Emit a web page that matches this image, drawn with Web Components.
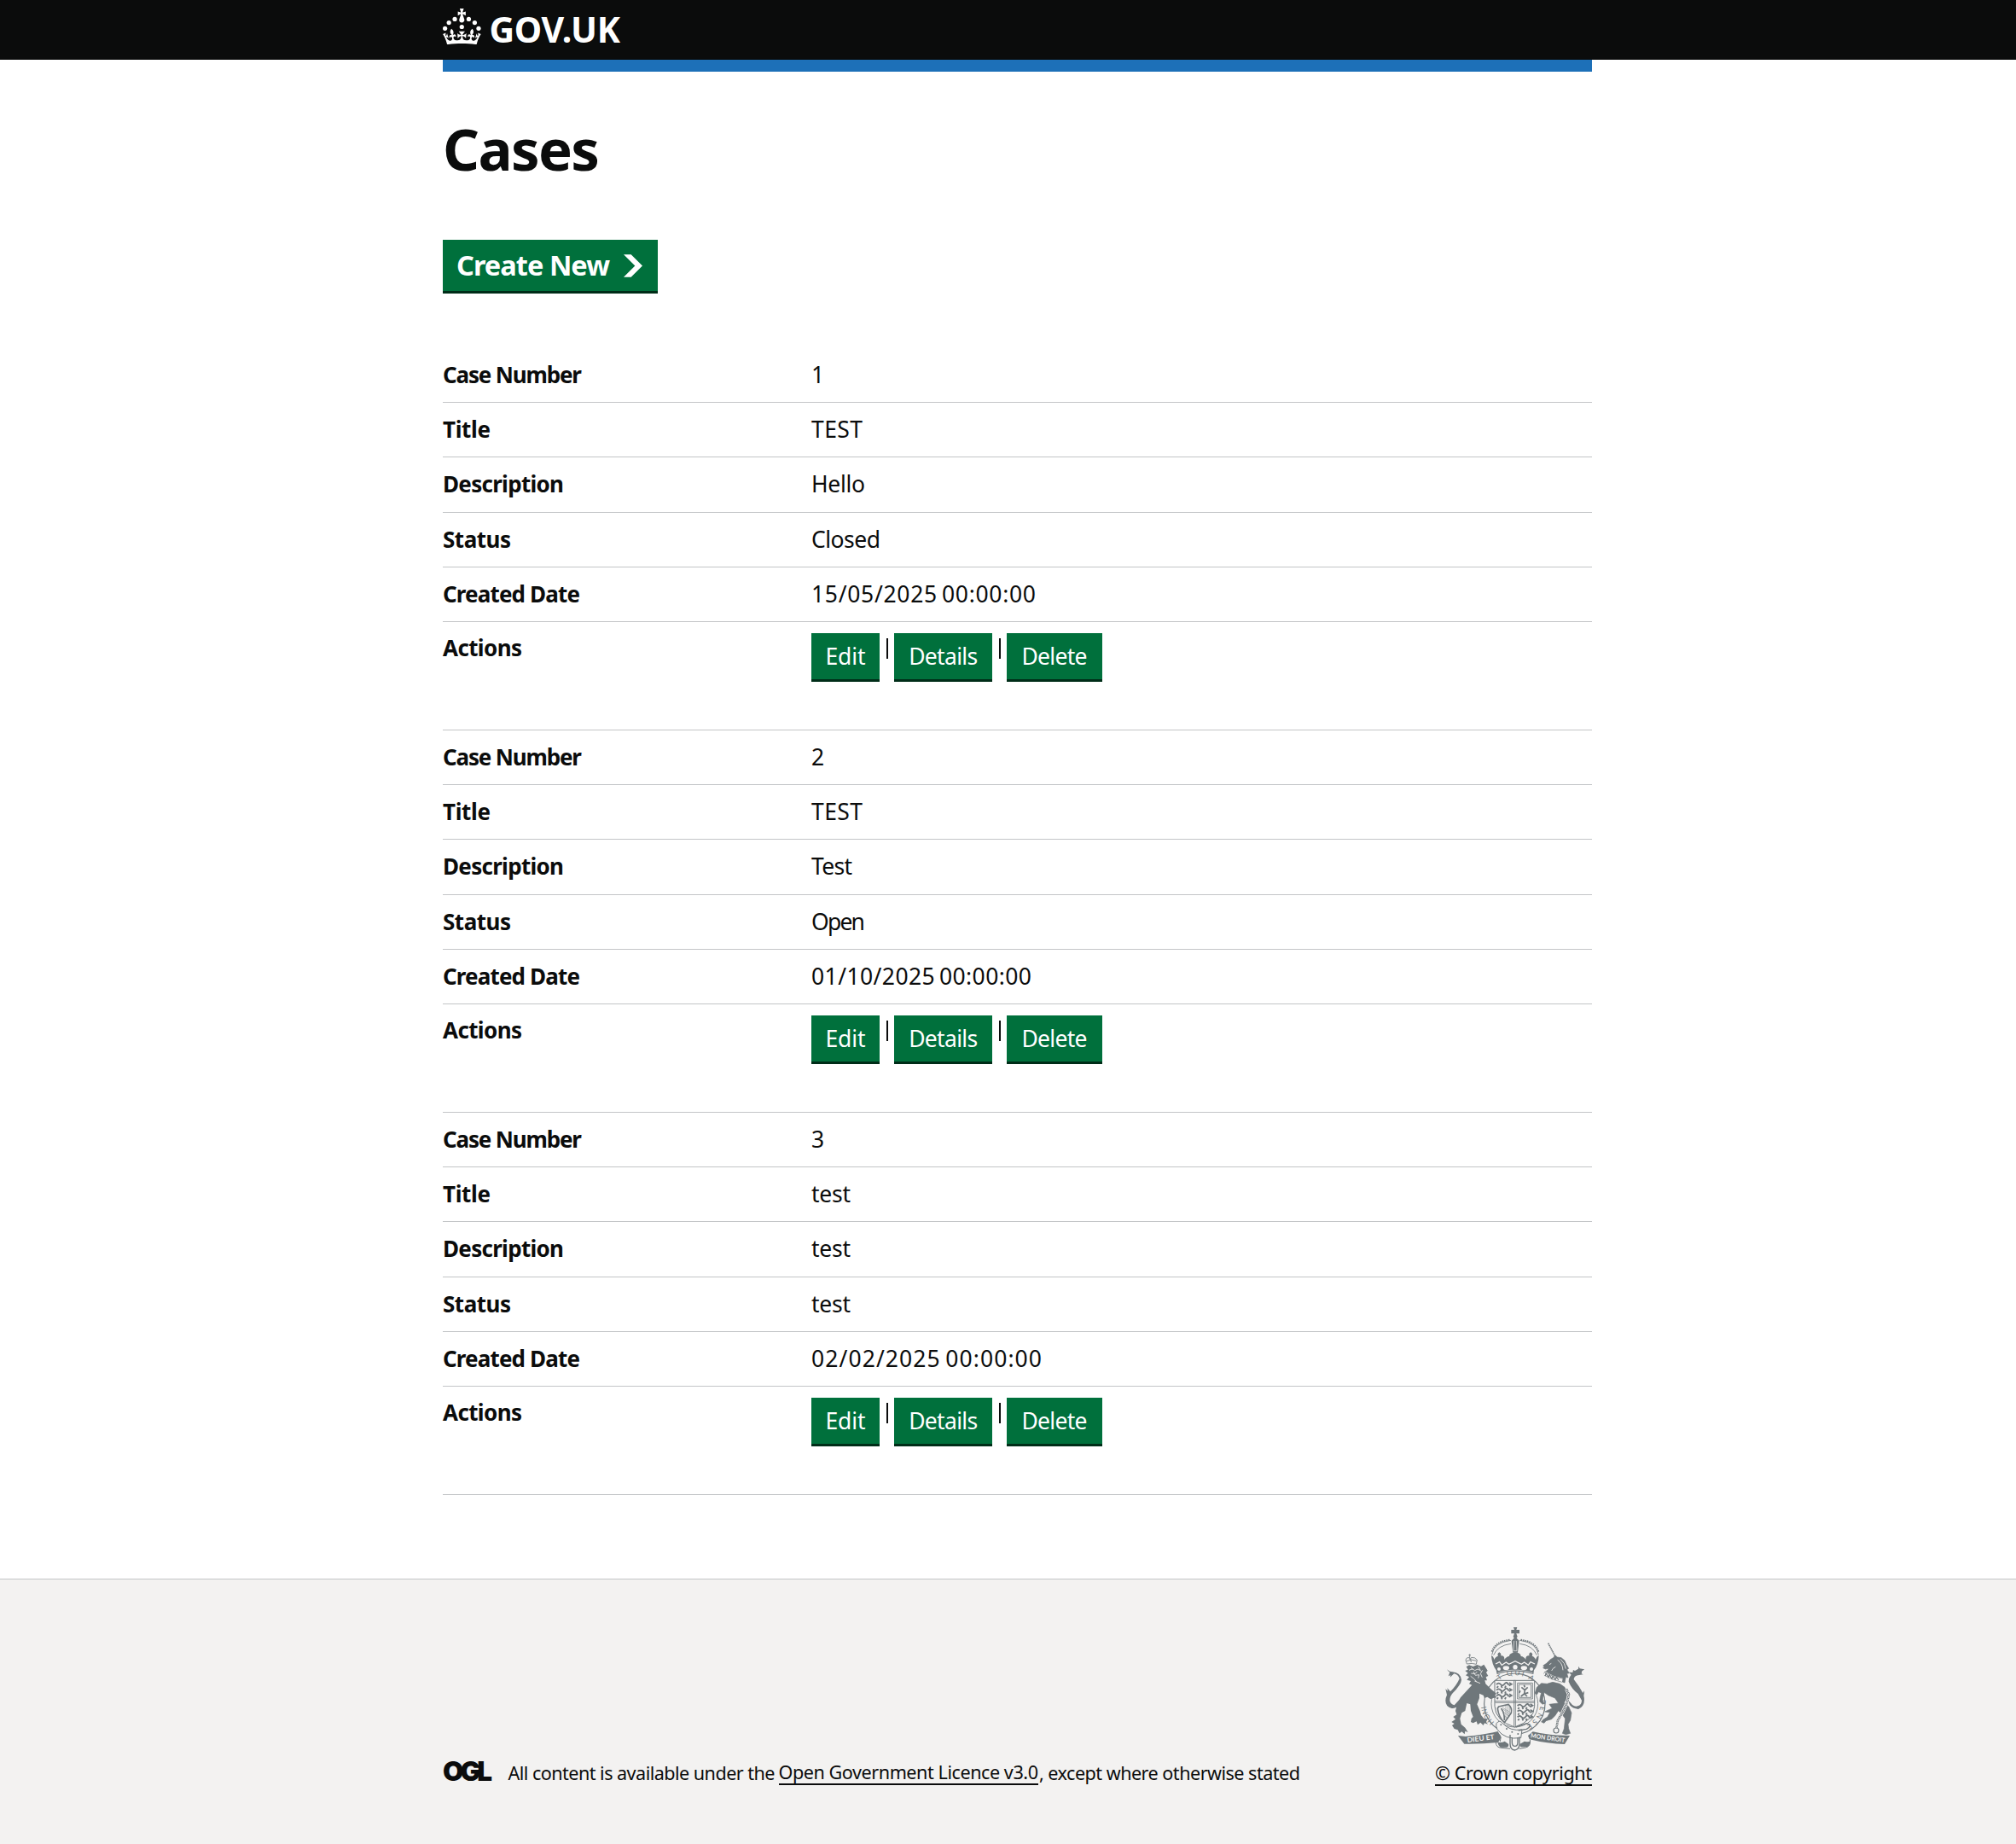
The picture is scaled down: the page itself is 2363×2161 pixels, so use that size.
<!DOCTYPE html>
<html lang="en">
<head>
<meta charset="utf-8">
<title>Cases - GOV.UK</title>
<style>
  html, body { margin: 0; padding: 0; }
  body { background: #fff; color: #0b0c0c; font-family: "Noto Sans", "Open Sans", sans-serif; }
</style>
</head>
<body>
<cases-page></cases-page>
<script>
const define = (name, html, setup) => {
  const template = document.createElement('template');
  template.innerHTML = html;
  customElements.define(name, class extends HTMLElement {
    constructor() {
      super();
      this.attachShadow({ mode: 'open' }).append(template.content.cloneNode(true));
    }
    connectedCallback() { if (setup) setup(this, this.shadowRoot); }
  });
};

/* A single line of text tracked to a given measure */
define('tracked-text', `
  <style>
    :host { display: inline-block; white-space: nowrap; }
    :host([tight]) { word-spacing: -2.5px; }
    span { display: inline-block; white-space: pre; }
  </style><span><slot></slot></span>`, (host, root) => {
  const span = root.querySelector('span');
  const target = parseFloat(host.getAttribute('measure'));
  host.style.width = target + 'px';
  const n = host.textContent.length;
  if (n > 1) span.style.letterSpacing = ((target - span.getBoundingClientRect().width) / (n - 1)) + 'px';
});

define('crown-icon', `
  <style>:host { display: block; width: 45px; height: 42.2px; } svg { display: block; width: 100%; height: 100%; }</style>
  <svg viewBox="0 0 64 60" fill="#fff" role="img" aria-label="Crown">
    <circle cx="20" cy="17.6" r="3.7"/><circle cx="10.2" cy="23.5" r="3.7"/><circle cx="3.7" cy="33.2" r="3.7"/><circle cx="31.7" cy="30.6" r="3.7"/><circle cx="43.3" cy="17.6" r="3.7"/><circle cx="53.2" cy="23.5" r="3.7"/><circle cx="59.7" cy="33.2" r="3.7"/>
    <path d="M33.1,9.8c.2-.1.3-.3.5-.5l4.6,2.4v-6.8l-4.6,1.5c-.1-.2-.3-.3-.5-.5l1.9-5.9h-6.7l1.9,5.9c-.2.1-.3.3-.5.5l-4.6-1.5v6.8l4.6-2.4c.1.2.3.3.5.5l-2.6,8c-.9,2.8,1.2,5.7,4.1,5.7h0c3,0,5.1-2.9,4.1-5.7l-2.6-8ZM37,37.9s-3.4,3.8-4.1,6.1c2.2,0,4.2-.5,6.4-2.8l-.7,8.5c-2-2.8-4.4-4.1-5.7-3.8.1,3.1.5,6.7,5.8,7.2,3.7.3,6.7-1.5,7-3.8.4-2.6-2-4.3-3.7-1.6-1.4-4.5,2.4-6.1,4.9-3.2-1.9-4.5-1.8-7.7,2.4-10.9,3,4,2.6,7.3-1.2,11.1,2.4-1.3,6.2,0,4,4.6-1.2-2.8-3.7-2.2-4.2.2-.3,1.7.7,3.7,3,4.2,1.9.3,4.7-.9,7-5.9-1.3,0-2.4.7-3.9,1.7l2.4-8c.6,2.3,1.4,3.7,2.2,4.5.6-1.6.5-2.8,0-5.3l5,1.8c-2.6,3.6-5.2,8.7-7.3,17.5-7.4-1.1-15.7-1.7-24.5-1.7h0c-8.8,0-17.1.6-24.5,1.7-2.1-8.9-4.7-13.9-7.3-17.5l5-1.8c-.5,2.5-.6,3.7,0,5.3.8-.8,1.6-2.3,2.2-4.5l2.4,8c-1.5-1-2.6-1.7-3.9-1.7,2.3,5,5.2,6.2,7,5.9,2.3-.4,3.3-2.4,3-4.2-.5-2.4-3-3.1-4.2-.2-2.2-4.6,1.6-6,4-4.6-3.7-3.7-4.2-7.1-1.2-11.1,4.2,3.2,4.3,6.4,2.4,10.9,2.5-2.8,6.3-1.3,4.9,3.2-1.8-2.7-4.1-1-3.7,1.6.3,2.3,3.3,4.1,7,3.8,5.4-.5,5.7-4.2,5.8-7.2-1.3-.2-3.7,1-5.7,3.8l-.7-8.5c2.2,2.3,4.2,2.7,6.4,2.8-.7-2.3-4.1-6.1-4.1-6.1h10.6,0Z"/>
  </svg>`);

define('site-header', `
  <style>
    :host { display: block; }
    .bar { background: #0b0c0c; height: 70px; }
    .inner { width: 1347px; margin: 0 0 0 519px; display: flex; align-items: flex-start; box-sizing: border-box; padding-top: 10px; }
    .name { margin-left: 9.5px; color: #fff; font: 700 41px/56px "Noto Sans", sans-serif; margin-top: -4px; }
    .strip { margin-left: 519px; width: 1347px; height: 14px; background: #1d70b8; }
  </style>
  <div class="bar"><div class="inner"><crown-icon></crown-icon><tracked-text class="name" measure="153.5">GOV.UK</tracked-text></div></div>
  <div class="strip"></div>`);

define('start-button', `
  <style>
    :host { display: flex; width: 252px; height: 60px; box-sizing: border-box; padding-left: 16px; align-items: center; background: #00703c; box-shadow: 0 3px 0 #002d18; color: #fff; font-weight: 700; font-size: 32.5px; line-height: 44px; }
    svg { width: 22px; height: 27px; margin-left: 16px; }
    ::slotted(*) { margin-top: 0; }
  </style>
  <slot></slot>
  <svg viewBox="0 0 33 40" fill="#fff"><path d="M0 0h13l20 20-20 20H0l20-20z"/></svg>`);

define('action-button', `
  <style>
    :host { display: flex; justify-content: center; height: 54px; background: #00703c; box-shadow: 0 3px 0 #002d18; color: #fff; line-height: 55px; }
  </style><slot></slot>`);

define('summary-row', `
  <style>
    :host { display: flex; box-sizing: border-box; height: 64.15px; padding-top: 14px; border-bottom: 1px solid #c3c5c7; font-size: 26.5px; line-height: 35px; }
    :host([tall]) { height: 127.25px; padding-top: 13.5px; }
    .key { width: 432px; font-weight: 700; font-size: 26px; }
  </style>
  <div class="key"><slot name="key"></slot></div><div><slot></slot></div>`);

const KEYS = [['Case Number', 163], ['Title', 56], ['Description', 142], ['Status', 80], ['Created Date', 161]];

define('case-actions', `
  <style>
    :host { display: flex; align-items: flex-start; }
    .edit { width: 80px; } .details { width: 115.3px; } .delete { width: 111.3px; }
    i { width: 2px; height: 24px; background: #0b0c0c; margin: 6px 7px 0 8px; }
  </style>
  <action-button class="edit"><tracked-text measure="47">Edit</tracked-text></action-button><i></i>
  <action-button class="details"><tracked-text measure="81">Details</tracked-text></action-button><i></i>
  <action-button class="delete"><tracked-text measure="77">Delete</tracked-text></action-button>`);

define('case-summary', `<style>:host { display: block; }</style>`, (host, root) => {
  const values = host.getAttribute('values').split('|');
  const widths = host.getAttribute('widths').split('|');
  KEYS.forEach(([key, width], i) => {
    const row = document.createElement('summary-row');
    row.innerHTML = `<tracked-text slot="key" measure="${width}">${key}</tracked-text><tracked-text ${i === 4 ? 'tight' : ''} measure="${widths[i]}">${values[i]}</tracked-text>`;
    root.append(row);
  });
  const row = document.createElement('summary-row');
  row.setAttribute('tall', '');
  row.innerHTML = '<tracked-text slot="key" measure="93">Actions</tracked-text><case-actions></case-actions>';
  root.append(row);
});

define('royal-arms', `
  <style>:host { display: block; width: 163.33px; height: 146px; } svg { display: block; width: 100%; height: 100%; }</style>
  <svg viewBox="102 48 490 438" fill="none" stroke="#6f777b" stroke-width="3" role="img" aria-label="Royal coat of arms">
    <defs>
      <path id="ringL" d="M278 388A92 92 0 0 1 330 226"/>
      <path id="ringT" d="M282 246A92 92 0 0 1 412 246"/>
      <path id="ringR" d="M421 262A93 93 0 0 1 380 400"/>
      <g id="lions" stroke-width="5.5">
        <path d="M2 8q8-8 15 0t14-2 14 4M8 14l-4 6m15-7l3 7m13-7l-3 7M47 2l8 5-9 5"/>
        <path transform="translate(0 20)" d="M2 8q8-8 15 0t14-2 14 4M8 14l-4 6m15-7l3 7m13-7l-3 7M47 2l8 5-9 5"/>
        <path transform="translate(0 40)" d="M2 8q8-8 15 0t14-2 14 4M8 14l-4 6m15-7l3 7m13-7l-3 7M47 2l8 5-9 5"/>
      </g>
    </defs>
    <!-- garter and shield -->
    <circle cx="346" cy="320" r="107" fill="#f3f2f1" stroke-width="3.5"/>
    <circle cx="346" cy="320" r="82" stroke-width="2.5"/>
    <g fill="#6f777b" stroke="none" font-family="Lato, sans-serif" font-size="25">
      <text><textPath href="#ringL" startOffset="4">HONI</textPath></text>
      <text><textPath href="#ringT" startOffset="12" textLength="125">T QUI A</textPath></text>
      <text><textPath href="#ringR" startOffset="10" textLength="145">Y PENSE</textPath></text>
    </g>
    <path d="M276 238h140v90q-2 52-70 74-68-22-70-74z" fill="#f3f2f1"/>
    <path d="M344 238v164M349 238v162M276 311h140M277 316h139M356 247h53v56h-53zM361 252h43v46h-43z" stroke-width="2.5"/>
    <use href="#lions" x="280" y="244"/><use href="#lions" x="354" y="319"/>
    <path d="M370 262l12 10 10-10m-10 8l-2 15 14-4m-14 4l-12 9m12-9l10 9m-24-20l-4 8m20-20l-3-8" stroke-width="5"/>
    <path d="M290 330l34-8q14 12 10 30l-24 34q-20-18-24-50zM299 336q12 18 11 42" stroke-width="5"/>
    <path d="M303 333l25 16m-22-10l22 18m-20-8l20 16m-18-4l13 12m-8-46v45m7-47v38m6-38v29" stroke-width="1.5"/>
    <!-- belt -->
    <path d="M282 389q10-13 20-2 28 31 70 24l-4 29q-57 8-83-30-6-12-3-21z" fill="#f3f2f1"/>
    <path d="M350 402l38-13q23 7 0 20l-29 5M330 429v31q0 22 16 23 18-3 17-25v-22M337 438v18q0 13 10 13t10-13v-18" stroke-width="4"/>
    <g fill="#6f777b" stroke="none"><circle cx="298" cy="394" r="3"/><circle cx="318" cy="408" r="3"/><circle cx="337" cy="419" r="3"/><circle cx="358" cy="426" r="3"/></g>
    <!-- crown -->
    <g fill="#6f777b" stroke="none">
      <path d="M342 51h13l-3 9h11v13h-11l4 11-3 5 9 9-5 42h-17l-5-42 9-9-3-5 4-11h-11V60h11z"/>
      <path d="M264 151q8 2 10 14 6-12 14-13-5-7 4-13 9 5 5 12 14-2 13 14 7-11 17-12-1-10 21-15 21 5 20 15 11 1 17 12-1-16 13-14-4-8 5-12 9 6 4 13 9 2 13 13 3-12 11-14-1 31-17 51l-2 14q-64-20-128 0l-3-14q-15-20-17-51z"/>
    </g>
    <path d="M266 148q6-43 67-51M272 149q14-34 61-40M430 148q-6-43-66-51M424 149q-14-34-60-40" stroke-width="2.5"/>
    <path d="M266 137q12-36 64-42M430 137q-12-36-64-42" stroke-width="6" stroke-dasharray="4.5 3"/>
    <path d="M344 99l-2 35h12l-2-35" fill="#6f777b" stroke="#f3f2f1" stroke-width="2"/>
    <path d="M279 180l14-7 8 11 15-10 10 7 22-11 22 11 10-7 14 10 8-11 15 7" stroke="#f3f2f1" stroke-width="4"/>
    <g fill="#f3f2f1" stroke="none"><ellipse cx="291" cy="198" rx="6" ry="6"/><ellipse cx="316" cy="194" rx="11" ry="7"/><circle cx="348" cy="191" r="8"/><ellipse cx="379" cy="194" rx="11" ry="7"/><ellipse cx="405" cy="198" rx="6" ry="6"/></g>
    <path d="M287 211q61-20 122 0" stroke="#f3f2f1" stroke-width="2"/>
    <!-- lion -->
    <g fill="#6f777b" stroke="none">
      <path d="M176 190L186 184 200 189 214 183 228 188 238 182 251 203 246 210 253 222 245 226 249 238 241 238 244 250 262 268 282 284 276 290 284 298 270 300 262 304 250 296 240 300 236 290 222 284 222 300 214 322 224 345 228 360 238 372 250 374 246 384 252 392 240 388 236 396 226 386 216 394 212 382 200 388 192 384 194 372 200 366 192 345 190 322 178 318 172 345 160 352 154 372 158 392 172 404 182 420 172 416 170 427 160 418 152 424 146 412 134 408 126 396 134 390 124 384 138 374 130 366 142 358 138 345 144 320 156 298 178 274 196 254 186 250 192 240 178 236 186 226 174 220 182 212 172 204 182 200Z"/>
      <path d="M109 199q6 9 19 9 28 3 31 28-1 16-31 47-10 11-10 25 2 13 16 17l36-39-19 37q-12 14-26 13-22-5-22-27 0-9 5-20l-5-21 8 7-2-10 11 12q21-20 32-45-4-15-19-18l-14 13 2-8-8 4 5-14q-8-2-9-10z"/>
    </g>
    <path d="M186 202l12-5 8 6 10-5 13 7M193 213l14 2 7-8M201 207l7 13 13-2-3 12M191 223l12 9 9 10M219 190l6 11M233 202l-7 12 6 13M193 193l6 8M205 240l20 8" stroke="#f3f2f1" stroke-width="2.5"/>
    <path d="M178 180l-4-14q2-9 11-9l4 7 5-7q14-1 20 9l-3 15q-14-5-33-1zM188 145v14M184 149h8M191 161l2 13M177 170q16-9 35-1" stroke-width="2.5"/>
    <!-- unicorn -->
    <g fill="#6f777b" stroke="#6f777b" stroke-width="2" stroke-linejoin="round">
      <path d="M446 186L458 178 472 164 484 157 488 149 496 156 510 158 522 168 528 182 536 196 530 200 538 212 530 214 534 228 526 226 522 246 500 238 470 226 448 216 452 208 462 202 466 196 454 198 446 194 450 190Z"/>
      <path d="M424 262L440 248 460 250 480 244 505 250 522 262 530 285 528 305 520 315 536 330 546 352 542 378 534 392 536 408 542 424 526 428 514 424 520 408 522 390 524 372 512 356 500 344 488 362 476 374 456 380 450 388 440 384 446 376 462 366 470 350 452 348 478 336 468 322 500 318 488 300 464 290 450 280 446 296 444 312 452 318 444 322 434 312 436 296 440 282 430 278 424 288 418 282Z"/>
    </g>
    <path d="M592 199l-9 6-2 9 6 3-14 2q-18 1-19 15 19 24 32 48l6-9-3 19q8 34-19 47-20-2-30-14l-6-18 15 17q10 7 19 4 14-5 14-20l-13-23q-23-18-33-43 0-15 9-24l-8-9 13 1 2-9 6 3 12-7 1-9 4 8z" fill="#6f777b" stroke="none"/>
    <path d="M464 107l24 45" stroke-width="4.5" stroke-dasharray="5 1.5"/>
    <path d="M497 166q17 10 19 36M507 163q17 14 19 34M468 182l7-4M490 190q-11 5-14 14" stroke="#f3f2f1" stroke-width="2.5"/>
    <path d="M450 212q25 18 64 25" stroke="#f3f2f1" stroke-width="14"/>
    <path d="M450 208q28 18 66 24M450 220q28 16 62 24" stroke-width="2"/>
    <path d="M454 222l2-9 9 14 3-9 9 14 3-9 9 12 4-8 8 10" stroke-width="3.5"/>
    <path d="M528 268l9 19-6 27-15 33-18 31-5 27" stroke="#f3f2f1" stroke-width="12"/>
    <path d="M528 268l9 19-6 27-15 33-18 31-5 27" stroke-width="7.5" stroke-dasharray="11 2"/>
    <path d="M528 268l9 19-6 27-15 33-18 31-5 27" stroke="#f3f2f1" stroke-width="3" stroke-dasharray="6 7" stroke-dashoffset="-2.5"/>
    <circle cx="492" cy="414" r="9" stroke-width="3.5" fill="#f3f2f1"/>
    <!-- motto ribbons -->
    <g fill="#6f777b" stroke="none">
      <path d="M147 432l26 3q65-6 114-18l12 22-11 17q-60 6-119 5z"/>
      <path d="M410 418q56 14 130 14l-18 30q-60-1-124-17l-5-13z"/>
      <path d="M286 455q15 3 25-3l13 9q3 9-5 12h-23q-8-6-10-18zM365 461l16-9q14 4 21-1-1 14-11 21h-21q-8-2-5-11z"/>
    </g>
    <path d="M280 455q0 19 20 20l30 3M284 425q18 1 11 28M400 447q4 22-15 27l-23 4" stroke-width="3"/>
    <g fill="#f3f2f1" stroke="none" font-family="Lato, sans-serif" font-weight="700" font-size="24">
      <text transform="translate(180 456) rotate(-7)" textLength="96" lengthAdjust="spacingAndGlyphs">DIEU ET</text>
      <text transform="translate(401 439) rotate(8)" font-size="22" textLength="122" lengthAdjust="spacingAndGlyphs">MON DROIT</text>
    </g>
  </svg>`);

define('site-footer', `
  <style>
    :host { display: block; box-sizing: border-box; height: 311px; background: #f3f2f1; border-top: 1px solid #c3c5c7; font-size: 21.6px; line-height: 29px; }
    .inner { width: 1347px; margin-left: 519px; padding-top: 55px; display: flex; justify-content: space-between; align-items: flex-end; }
    .meta { display: flex; align-items: center; }
    .ogl { width: 58px; margin: 0 18.5px 3px 0; font: 900 31.5px/29px Inter, sans-serif; }
    .copy { display: flex; flex-direction: column; align-items: center; }
    royal-arms { margin: 0 0 11px 3px; }
    a { display: inline-block; color: inherit; box-sizing: border-box; height: 30px; border-bottom: 2px solid #0b0c0c; }
    .meta > a { margin-left: 4px; }
    .rest { margin-left: 1px; }
  </style>
  <div class="inner">
    <div class="meta">
      <tracked-text class="ogl" measure="58">OGL</tracked-text>
      <tracked-text measure="313">All content is available under the</tracked-text>
      <a><tracked-text measure="304.5">Open Government Licence v3.0</tracked-text></a>
      <tracked-text class="rest" measure="306">, except where otherwise stated</tracked-text>
    </div>
    <div class="copy">
      <royal-arms></royal-arms>
      <a><tracked-text measure="184">© Crown copyright</tracked-text></a>
    </div>
  </div>`);

define('cases-page', `
  <style>
    :host { display: block; height: 2161px; overflow: hidden; }
    main { width: 1347px; height: 1766px; margin-left: 519px; box-sizing: border-box; padding-top: 53px; }
    h1 { margin: 0; font-size: 67px; line-height: 74px; font-weight: 700; height: 144px; }
    start-button { margin-bottom: 67.2px; }
  </style>
  <site-header></site-header>
  <main>
    <h1><tracked-text measure="184">Cases</tracked-text></h1>
    <start-button><tracked-text measure="180">Create New</tracked-text></start-button>
    <case-summary values="1|TEST|Hello|Closed|15/05/2025 00:00:00" widths="12|60|63|81|263"></case-summary>
    <case-summary values="2|TEST|Test|Open|01/10/2025 00:00:00" widths="15|60|48|63|258"></case-summary>
    <case-summary values="3|test|test|test|02/02/2025 00:00:00" widths="15|46|46|46|270"></case-summary>
  </main>
  <site-footer></site-footer>`);
</script>
</body>
</html>
